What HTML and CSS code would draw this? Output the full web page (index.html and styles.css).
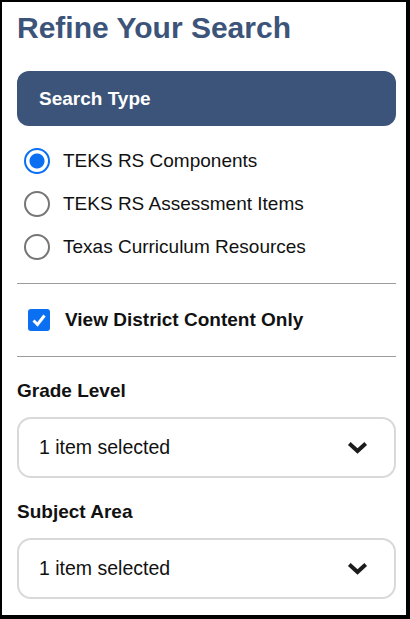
FILE: index.html
```html
<!DOCTYPE html>
<html lang="en">
<head>
    <meta charset="UTF-8">
    <meta name="viewport" content="width=device-width, initial-scale=1.0">
    <title>Refine Your Search</title>
    <link rel="stylesheet" href="styles.css">
</head>
<body>
    <div class="filters">
        <h1 class="filters-title">Refine Your Search</h1>

        <div class="section-bar">Search Type</div>

        <!-- Search type options -->
        <div class="radio-list">
            <label class="radio-row">
                <input type="radio" name="searchType" checked>
                <span>TEKS RS Components</span>
            </label>
            <label class="radio-row">
                <input type="radio" name="searchType">
                <span>TEKS RS Assessment Items</span>
            </label>
            <label class="radio-row">
                <input type="radio" name="searchType">
                <span>Texas Curriculum Resources</span>
            </label>
        </div>

        <hr class="divider">

        <label class="check-row">
            <input type="checkbox" checked>
            <span>View District Content Only</span>
        </label>

        <hr class="divider">

        <!-- Dropdown filters -->
        <div class="field">
            <div class="field-label">Grade Level</div>
            <div class="select-box">
                <span>1 item selected</span>
                <svg class="chevron" width="21" height="13" viewBox="0 0 21 13">
                    <polyline points="2.3,2.6 10.5,10 18.7,2.6" fill="none" stroke="#1c1c1c" stroke-width="4"/>
                </svg>
            </div>
        </div>

        <div class="field">
            <div class="field-label">Subject Area</div>
            <div class="select-box">
                <span>1 item selected</span>
                <svg class="chevron" width="21" height="13" viewBox="0 0 21 13">
                    <polyline points="2.3,2.6 10.5,10 18.7,2.6" fill="none" stroke="#1c1c1c" stroke-width="4"/>
                </svg>
            </div>
        </div>
    </div>
</body>
</html>
```

FILE: styles.css
```css
html {
    background: #000;
}

body {
    margin: 2px 4px 4px 2px;
    height: 613px;
    background: #fff;
    font-family: 'Liberation Sans', Arial, sans-serif;
    color: #111;
    overflow: hidden;
}

.filters {
    padding: 0 10px 0 15px;
}

.filters-title {
    margin: 9px 0 0;
    font-size: 30px;
    line-height: 34px;
    font-weight: bold;
    color: #3c5479;
}

.section-bar {
    margin-top: 26px;
    height: 55px;
    line-height: 55px;
    padding-left: 22px;
    border-radius: 12px;
    background: #3c5479;
    color: #fff;
    font-size: 19px;
    font-weight: bold;
}

.radio-list {
    margin-top: 13px;
}

.radio-row {
    display: flex;
    align-items: center;
    height: 43px;
    gap: 13px;
    padding-left: 7px;
    font-size: 19px;
}

.radio-row input {
    appearance: none;
    flex: none;
    margin: 0;
    width: 26px;
    height: 26px;
    border: 2px solid #767676;
    border-radius: 50%;
    background: #fff;
}

.radio-row input:checked {
    border-color: #0b6ff2;
    background: radial-gradient(circle, #0b6ff2 0 7px, #fff 8px);
}

.divider {
    margin: 15px 0 0;
    border: none;
    border-top: 1px solid #9c9c9c;
}

.check-row {
    display: flex;
    align-items: center;
    gap: 15px;
    height: 72px;
    padding-left: 11px;
    font-size: 19px;
    font-weight: bold;
}

.check-row input {
    appearance: none;
    flex: none;
    margin: 0;
    width: 22px;
    height: 22px;
    border-radius: 3px;
    background: #0b6ff2 url("data:image/svg+xml,%3Csvg xmlns='http://www.w3.org/2000/svg' viewBox='0 0 22 22'%3E%3Cpolyline points='5.5,11.5 9.5,15.5 16.5,6.5' fill='none' stroke='white' stroke-width='3'/%3E%3C/svg%3E") center / 22px 22px no-repeat;
}

.check-row + .divider {
    margin-top: 0;
}

.field {
    margin-top: 23px;
}

.field-label {
    font-size: 19px;
    font-weight: bold;
    line-height: 22px;
}

.select-box {
    display: flex;
    align-items: center;
    justify-content: space-between;
    margin-top: 15px;
    height: 57px;
    padding: 0 26px 0 20px;
    border: 2px solid #d9d9d9;
    border-radius: 14px;
    font-size: 19.5px;
}

.chevron {
    display: block;
}
```
